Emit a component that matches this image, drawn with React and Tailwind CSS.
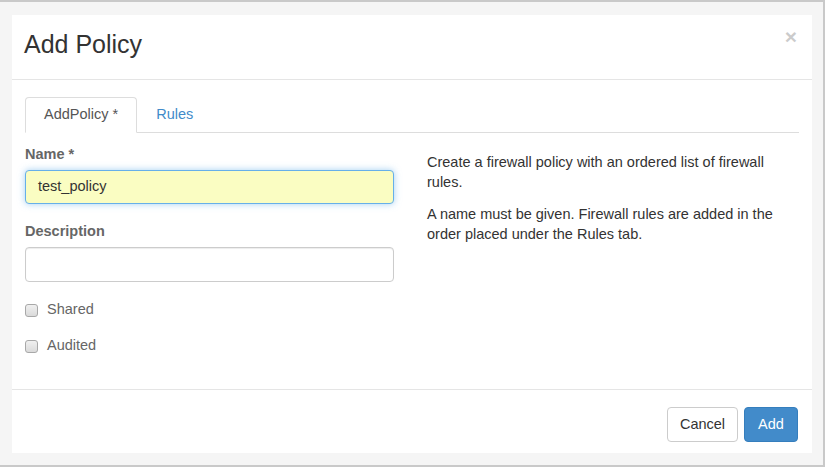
export default function App() {
  const font = { fontFamily: '"Liberation Sans", Arial, sans-serif' };
  return (
    <div className="w-[827px] h-[467px] bg-white" style={font}>
      <div className="w-[825px] h-[467px] border-t-2 border-r-2 border-b-2 border-[#c9c9c9] bg-[#f5f5f5] pt-[13px] pl-[12px]">
        <div className="w-[800px] h-[438px] bg-white flex flex-col">
          {/* header */}
          <div className="h-[65px] border-b border-[#e5e5e5] pl-[12px] pr-[15px] pt-[15px] flex justify-between items-start">
            <h3 className="text-[25px] leading-[28px] text-[#333]">Add Policy</h3>
            <span className="text-[21px] leading-[21px] font-bold text-black opacity-20 -mt-[4px]">×</span>
          </div>
          {/* body */}
          <div className="flex-1 px-[13px] pt-[17px]">
            <div className="flex border-b border-[#ddd] h-[36px]">
              <div className="h-[36px] px-[18px] border border-[#ddd] border-b-transparent rounded-t-[4px] bg-white text-[14.5px] text-[#555] flex items-center -mb-px">
                AddPolicy *
              </div>
              <div className="h-[35px] ml-[1px] px-[18px] text-[14.5px] text-[#428bca] flex items-center">
                Rules
              </div>
            </div>
            <div className="flex">
              <div className="w-[369px] pt-[11px]">
                <div className="text-[14.5px] leading-[20px] font-bold text-[#666]">Name *</div>
                <div className="mt-[6px] h-[34px] rounded-[4px] border border-[#66afe9] bg-[#fafdc2] shadow-[0_0_7px_rgba(102,175,233,0.6)] px-[12px] flex items-center text-[14.5px] text-[#333]">
                  test_policy
                </div>
                <div className="mt-[17px] text-[14.5px] leading-[20px] font-bold text-[#666]">Description</div>
                <div className="mt-[6px] h-[35px] rounded-[4px] border border-[#ccc] bg-white shadow-[inset_0_1px_1px_rgba(0,0,0,0.075)]"></div>
                <div className="mt-[18px] flex items-center h-[20px]">
                  <span className="w-[13px] h-[13px] rounded-[3px] border border-[#a8a8a8] bg-gradient-to-b from-[#f0f0f0] to-[#dadada]"></span>
                  <span className="ml-[9px] text-[14.5px] text-[#666]">Shared</span>
                </div>
                <div className="mt-[16px] flex items-center h-[20px]">
                  <span className="w-[13px] h-[13px] rounded-[3px] border border-[#a8a8a8] bg-gradient-to-b from-[#f0f0f0] to-[#dadada]"></span>
                  <span className="ml-[9px] text-[14.5px] text-[#666]">Audited</span>
                </div>
              </div>
              <div className="ml-[33px] w-[360px] pt-[19px] text-[14.5px] leading-[20px] text-[#333]">
                <p>Create a firewall policy with an ordered list of firewall rules.</p>
                <p className="mt-[12px]">A name must be given. Firewall rules are added in the order placed under the Rules tab.</p>
              </div>
            </div>
          </div>
          {/* footer */}
          <div className="h-[64px] border-t border-[#e5e5e5] pt-[17px] pr-[14px] flex justify-end items-start gap-[6px]">
            <button className="h-[35px] w-[71px] rounded-[4px] border border-[#ccc] bg-white text-[14.5px] text-[#333]">Cancel</button>
            <button className="h-[35px] w-[54px] rounded-[4px] border border-[#357ebd] bg-[#428bca] text-[14.5px] text-white">Add</button>
          </div>
        </div>
      </div>
    </div>
  );
}
